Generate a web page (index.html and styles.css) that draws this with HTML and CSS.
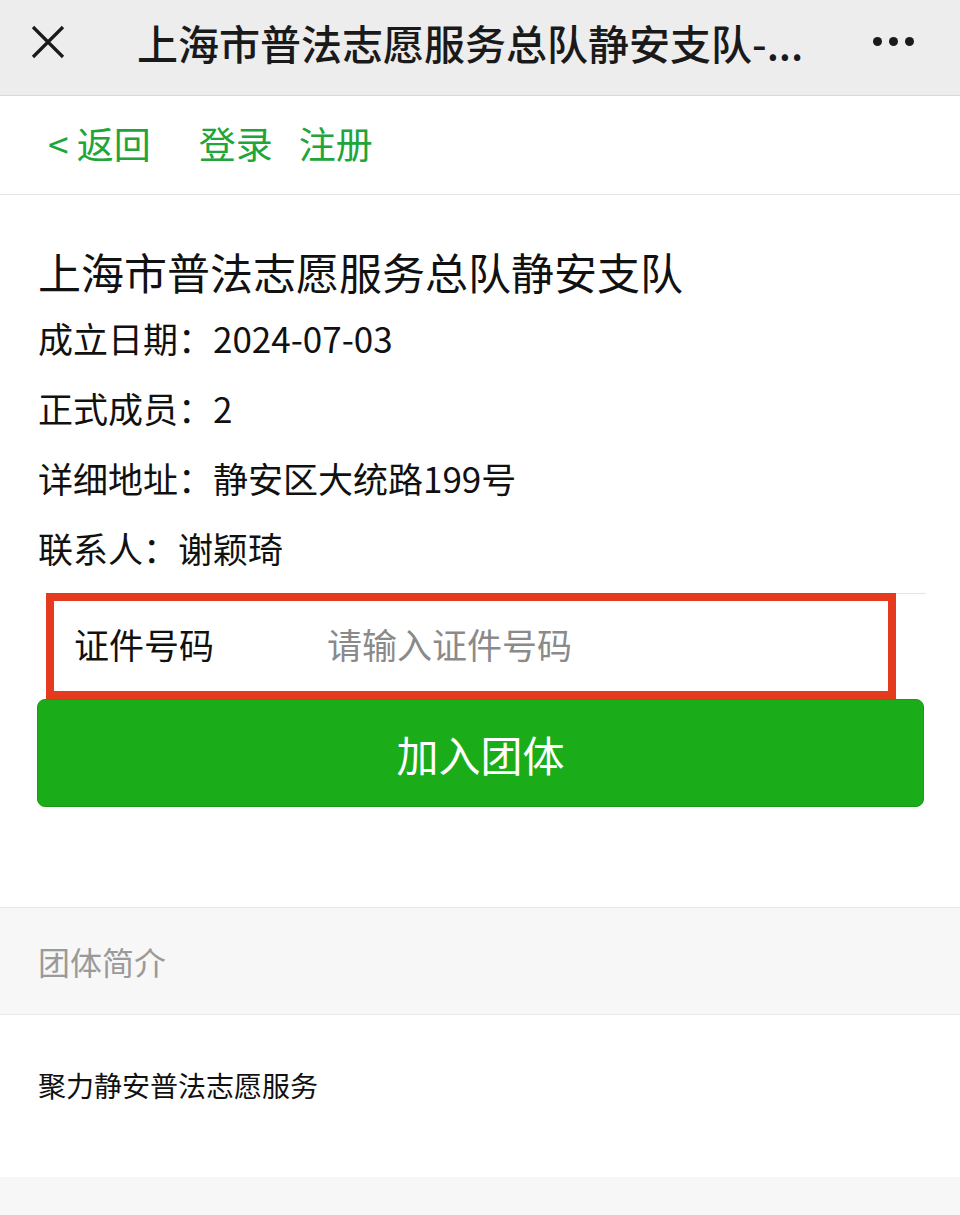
FILE: index.html
```html
<!DOCTYPE html>
<html lang="zh-CN">
<head>
  <meta charset="UTF-8" />
  <meta name="viewport" content="width=device-width, initial-scale=1.0"/>
  <title>加入团体</title>
  <link rel="stylesheet" href="styles.css">
</head>
<body>
  <!-- 顶部标题栏 -->
  <div class="topbar">
    <span class="close-btn">
      <svg width="36" height="36" viewBox="0 0 36 36"><path d="M3 3L33 33M33 3L3 33" stroke="#1a1a1a" stroke-width="3.2" fill="none"/></svg>
    </span>
    <span class="topbar-title">上海市普法志愿服务总队静安支队-...</span>
    <span class="more-btn"><i></i><i></i><i></i></span>
  </div>

  <!-- 导航 -->
  <div class="navbar">
    <a href="#" class="back">&lt; 返回</a>
    <a href="#" class="login">登录</a>
    <a href="#">注册</a>
  </div>

  <div class="team-info">
    <h2 class="team-name">上海市普法志愿服务总队静安支队</h2>
    <p>成立日期：2024-07-03</p>
    <p>正式成员：2</p>
    <p>详细地址：静安区大统路199号</p>
    <p>联系人：谢颖琦</p>
  </div>

  <div class="form-row">
    <label>证件号码</label>
    <input type="text" placeholder="请输入证件号码" />
  </div>

  <div class="btn-wrap">
    <button class="join-btn">加入团体</button>
  </div>

  <div class="section-title">团体简介</div>
  <div class="section-body">聚力静安普法志愿服务</div>
  <div class="footer-gap"></div>
</body>
</html>
```

FILE: styles.css
```css
body {
  margin: 0;
  font-family: "Noto Sans CJK SC", "Noto Sans", sans-serif;
  color: #111;
  background-color: #fff;
}
.topbar {
  height: 96px;
  background-color: #ededed;
  border-bottom: 1px solid #d9d9d9;
  display: flex;
  align-items: center;
  padding: 0 30px 12px 30px;
  box-sizing: border-box;
}
.close-btn {
  width: 36px;
  height: 36px;
  display: flex;
}
.topbar-title {
  margin-left: 71px;
  flex: 1;
  font-size: 41px;
  font-weight: 500;
  color: #1a1a1a;
  white-space: nowrap;
}
.more-btn {
  display: flex;
  gap: 7px;
  margin-right: 16px;
}
.more-btn i {
  width: 9px;
  height: 9px;
  border-radius: 50%;
  background-color: #1a1a1a;
}
.navbar {
  height: 99px;
  border-bottom: 1px solid #e5e5e5;
  display: flex;
  align-items: center;
  padding: 0 0 4px 48px;
  box-sizing: border-box;
}
.navbar a {
  color: #20a53a;
  font-size: 37px;
  text-decoration: none;
  margin-right: 26px;
}
.navbar a.back {
  margin-right: 48px;
}
.team-info {
  padding: 44px 38px 0 38px;
}
.team-name {
  margin: 0;
  font-size: 43px;
  font-weight: 400;
  line-height: 64px;
}
.team-info p {
  margin: 0;
  font-size: 35px;
  line-height: 70px;
}
.form-row {
  margin: 10px 64px 0 46px;
  height: 106px;
  border: 8px solid #e63a1e;
  box-sizing: border-box;
  display: flex;
  align-items: center;
  padding: 0 0 6px 20px;
  position: relative;
}
.form-row::after {
  content: "";
  position: absolute;
  top: -8px;
  right: -38px;
  width: 30px;
  height: 1px;
  background-color: #e5e5e5;
}
.form-row label {
  font-size: 35px;
  width: 251px;
}
.form-row input {
  border: none;
  outline: none;
  font-family: inherit;
  font-size: 35px;
  color: #111;
  flex: 1;
  background: transparent;
}
.form-row input::placeholder {
  color: #8a8a8a;
}
.btn-wrap {
  padding: 0 36px 0 37px;
}
.join-btn {
  width: 100%;
  height: 108px;
  background-color: #1aad19;
  border: 1px solid #179b16;
  border-radius: 8px;
  color: #fff;
  font-family: inherit;
  font-size: 42px;
}
.section-title {
  margin-top: 100px;
  height: 106px;
  background-color: #f7f7f7;
  border-top: 1px solid #e8e8e8;
  border-bottom: 1px solid #e8e8e8;
  display: flex;
  align-items: center;
  padding-left: 38px;
  font-size: 32px;
  color: #9a9a9a;
}
.section-body {
  height: 162px;
  box-sizing: border-box;
  padding: 50px 0 0 38px;
  font-size: 28px;
  line-height: 40px;
}
.footer-gap {
  height: 60px;
  background-color: #f7f7f7;
}
```
